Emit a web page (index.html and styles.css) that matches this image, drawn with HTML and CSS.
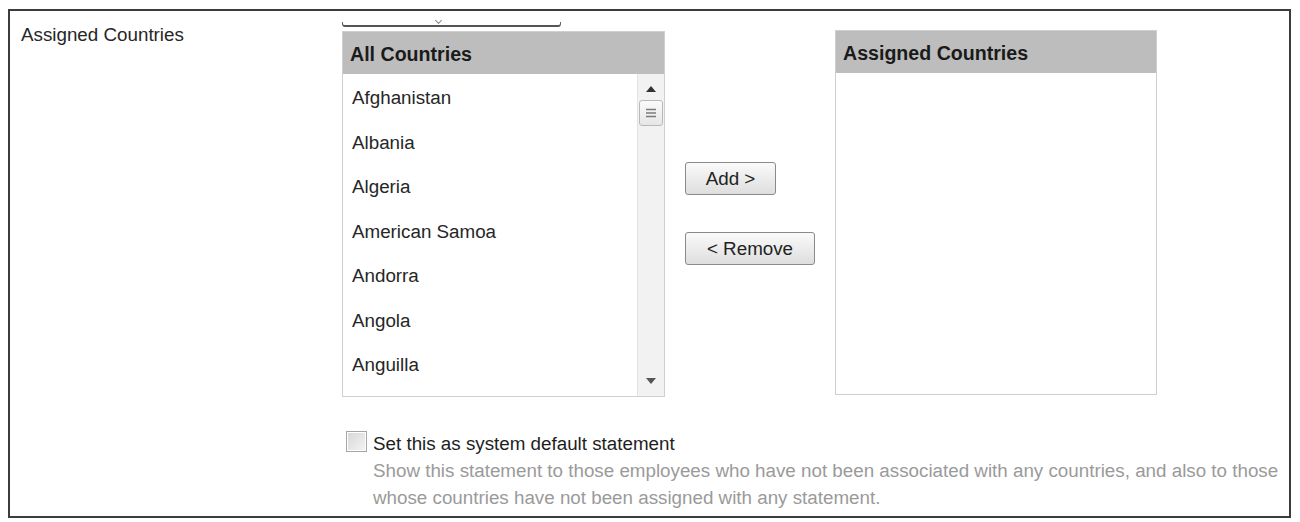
FILE: index.html
```html
<!DOCTYPE html>
<html>
<head>
<meta charset="utf-8">
<link rel="stylesheet" href="styles.css">
</head>
<body>
<div class="frame">
  <div class="label">Assigned Countries</div>
  <div class="content">
    <div class="clipped"><span class="clip-mark"></span></div>
    <div class="lists">
      <div class="listbox left">
        <div class="lb-head">All Countries</div>
        <div class="lb-body">
          <ul class="items">
            <li>Afghanistan</li>
            <li>Albania</li>
            <li>Algeria</li>
            <li>American Samoa</li>
            <li>Andorra</li>
            <li>Angola</li>
            <li>Anguilla</li>
          </ul>
          <div class="scrollbar">
            <svg class="arrow up" width="10" height="6" viewBox="0 0 10 6"><path d="M0 6 L5 0 L10 6 Z" fill="#333"/></svg>
            <div class="thumb">
              <svg width="12" height="10" viewBox="0 0 12 10"><path d="M1 1.5H11M1 5H11M1 8.5H11" stroke="#7a7a7a" stroke-width="1.3"/></svg>
            </div>
            <div class="track-fill"></div>
            <svg class="arrow down" width="10" height="6" viewBox="0 0 10 6"><path d="M0 0 L5 6 L10 0 Z" fill="#555"/></svg>
          </div>
        </div>
      </div>
      <div class="actions">
        <button class="btn add">Add &gt;</button>
        <button class="btn remove">&lt; Remove</button>
      </div>
      <div class="listbox right">
        <div class="lb-head">Assigned Countries</div>
        <div class="lb-body empty"></div>
      </div>
    </div>
    <div class="default-row">
      <span class="checkbox"></span>
      <div class="default-text">
        <div class="default-label">Set this as system default statement</div>
        <div class="default-desc">Show this statement to those employees who have not been associated with any countries, and also to those whose countries have not been assigned with any statement.</div>
      </div>
    </div>
  </div>
</div>
</body>
</html>
```

FILE: styles.css
```css
html, body {
  margin: 0;
  padding: 0;
  background: #ffffff;
}
body {
  font-family: "Liberation Sans", Arial, Helvetica, sans-serif;
  font-size: 18.8px;
  color: #262626;
}
.frame {
  margin: 9px 0 0 8px;
  width: 1279px;
  height: 505px;
  border: 2px solid #3c3c3c;
  display: flex;
  overflow: hidden;
}
.label {
  width: 321px;
  padding: 13px 0 0 11px;
  line-height: 21px;
  flex: none;
}
.content {
  flex: 1;
  display: flex;
  flex-direction: column;
}
.clipped {
  position: relative;
  width: 217px;
  height: 3px;
  margin-top: 11px;
  border: 1px solid #666;
  border-top: none;
  border-bottom: 2px solid #555;
  border-radius: 0 0 3px 3px;
}
.clip-mark {
  position: absolute;
  left: 93px;
  top: -4px;
  width: 4px;
  height: 4px;
  border-right: 1px solid #888;
  border-bottom: 1px solid #888;
  transform: rotate(45deg);
}
.lists {
  display: flex;
  margin-top: 3px;
  align-items: flex-start;
}
.listbox {
  border: 1px solid #cfcfcf;
  display: flex;
  flex-direction: column;
}
.listbox.left {
  width: 321px;
  height: 364px;
  margin-top: 1px;
}
.listbox.right {
  width: 320px;
  height: 363px;
}
.lb-head {
  background: #bdbdbd;
  height: 42px;
  line-height: 44px;
  padding-left: 7px;
  font-weight: bold;
  font-size: 19.6px;
  color: #1a1a1a;
  flex: none;
}
.lb-body {
  flex: 1;
  display: flex;
  background: #fff;
  min-height: 0;
}
.items {
  list-style: none;
  margin: 0;
  padding: 2px 0 0 9px;
  flex: 1;
}
.items li {
  height: 44.5px;
  line-height: 44.5px;
  white-space: nowrap;
}
.scrollbar {
  width: 26px;
  flex: none;
  background: #f2f2f2;
  border-left: 1px solid #e3e3e3;
  display: flex;
  flex-direction: column;
  align-items: center;
}
.arrow.up {
  margin-top: 12px;
}
.thumb {
  margin-top: 8px;
  width: 22px;
  height: 24px;
  border: 1px solid #b9b9b9;
  border-radius: 3px;
  background: linear-gradient(#fbfbfb, #e6e6e6);
  display: flex;
  align-items: center;
  justify-content: center;
}
.track-fill {
  flex: 1;
}
.arrow.down {
  margin-bottom: 12px;
}
.actions {
  width: 170px;
  flex: none;
  display: flex;
  flex-direction: column;
  align-items: flex-start;
  padding-left: 20px;
  box-sizing: border-box;
  padding-top: 132px;
}
.btn {
  font-family: "Liberation Sans", Arial, Helvetica, sans-serif;
  font-size: 18.8px;
  color: #222;
  background: linear-gradient(#fafafa, #dedede);
  border: 1px solid #8a8a8a;
  border-radius: 3px;
  height: 33px;
  padding: 0;
  cursor: pointer;
}
.btn.add {
  width: 91px;
}
.btn.remove {
  width: 130px;
  margin-top: 37px;
}
.default-row {
  display: flex;
  align-items: flex-start;
  margin-top: 35px;
  padding-left: 4px;
}
.checkbox {
  width: 19px;
  height: 19px;
  border: 1px solid #a5a5a5;
  background: linear-gradient(135deg, #d6d6d6, #f4f4f4);
  box-shadow: inset 0 0 0 1px #fff;
  flex: none;
  margin-top: -1px;
  margin-right: 6px;
}
.default-text {
  line-height: 27px;
  margin-top: -2px;
}
.default-label {
  color: #1e1e1e;
}
.default-desc {
  color: #9a9a9a;
  width: 915px;
}
```
